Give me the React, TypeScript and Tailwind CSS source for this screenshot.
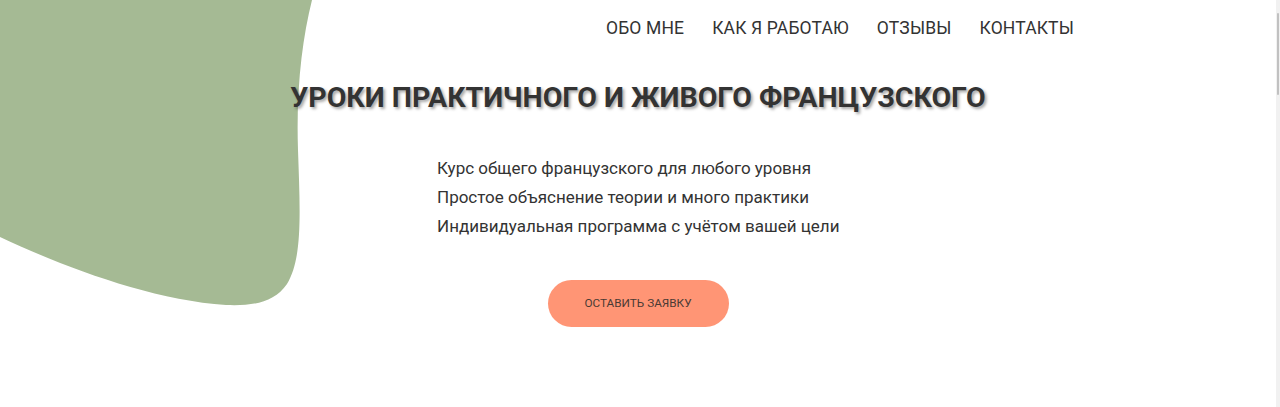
import React from "react";

const navItems = ["ОБО МНЕ", "КАК Я РАБОТАЮ", "ОТЗЫВЫ", "КОНТАКТЫ"];

const points = [
  "Курс общего французского для любого уровня",
  "Простое объяснение теории и много практики",
  "Индивидуальная программа с учётом вашей цели",
];

function Blob() {
  return (
    <svg
      className="absolute left-0 top-0"
      width="320"
      height="310"
      viewBox="0 0 320 310"
    >
      <path
        d="M0,0 L312,0 C302,40 296,90 298,150 C300,210 303,258 287,284 C274,303 252,306 226,305 C150,300 62,266 0,237 Z"
        fill="#a5ba94"
      />
    </svg>
  );
}

function App() {
  return (
    <div
      className="relative h-[407px] w-full overflow-hidden bg-white text-[#333]"
      style={{ fontFamily: "Roboto, 'Noto Sans', sans-serif" }}
    >
      <Blob />
      <div className="relative mr-[4px] flex flex-col">
        <nav className="flex justify-end gap-[28px] pr-[202px] pt-[17px] text-[17.5px] leading-[22px] tracking-[0.15px]">
          {navItems.map((item) => (
            <a key={item} href="#" className="text-[#333]">
              {item}
            </a>
          ))}
        </nav>
        <h1 className="mt-[41px] text-center text-[28.5px] font-bold leading-[36px] text-[#333] [text-shadow:2px_2px_3px_rgba(0,0,0,0.35)]">
          УРОКИ ПРАКТИЧНОГО И ЖИВОГО ФРАНЦУЗСКОГО
        </h1>
        <ul className="ml-[437px] mt-[38px] flex flex-col text-[17px] leading-[29px]">
          {points.map((p) => (
            <li key={p}>{p}</li>
          ))}
        </ul>
        <div className="mt-[39px] flex justify-center">
          <button className="h-[47px] w-[181px] rounded-full bg-[#ff9575] text-[11.75px] text-[#4a3a34]">
            ОСТАВИТЬ ЗАЯВКУ
          </button>
        </div>
      </div>
      <div className="absolute right-0 top-0 h-full w-[4px] bg-[#f1f1f1]">
        <div className="mx-auto mt-[13px] h-[82px] w-[2px] rounded bg-[#c1c1c1]" />
      </div>
    </div>
  );
}

export default App;
